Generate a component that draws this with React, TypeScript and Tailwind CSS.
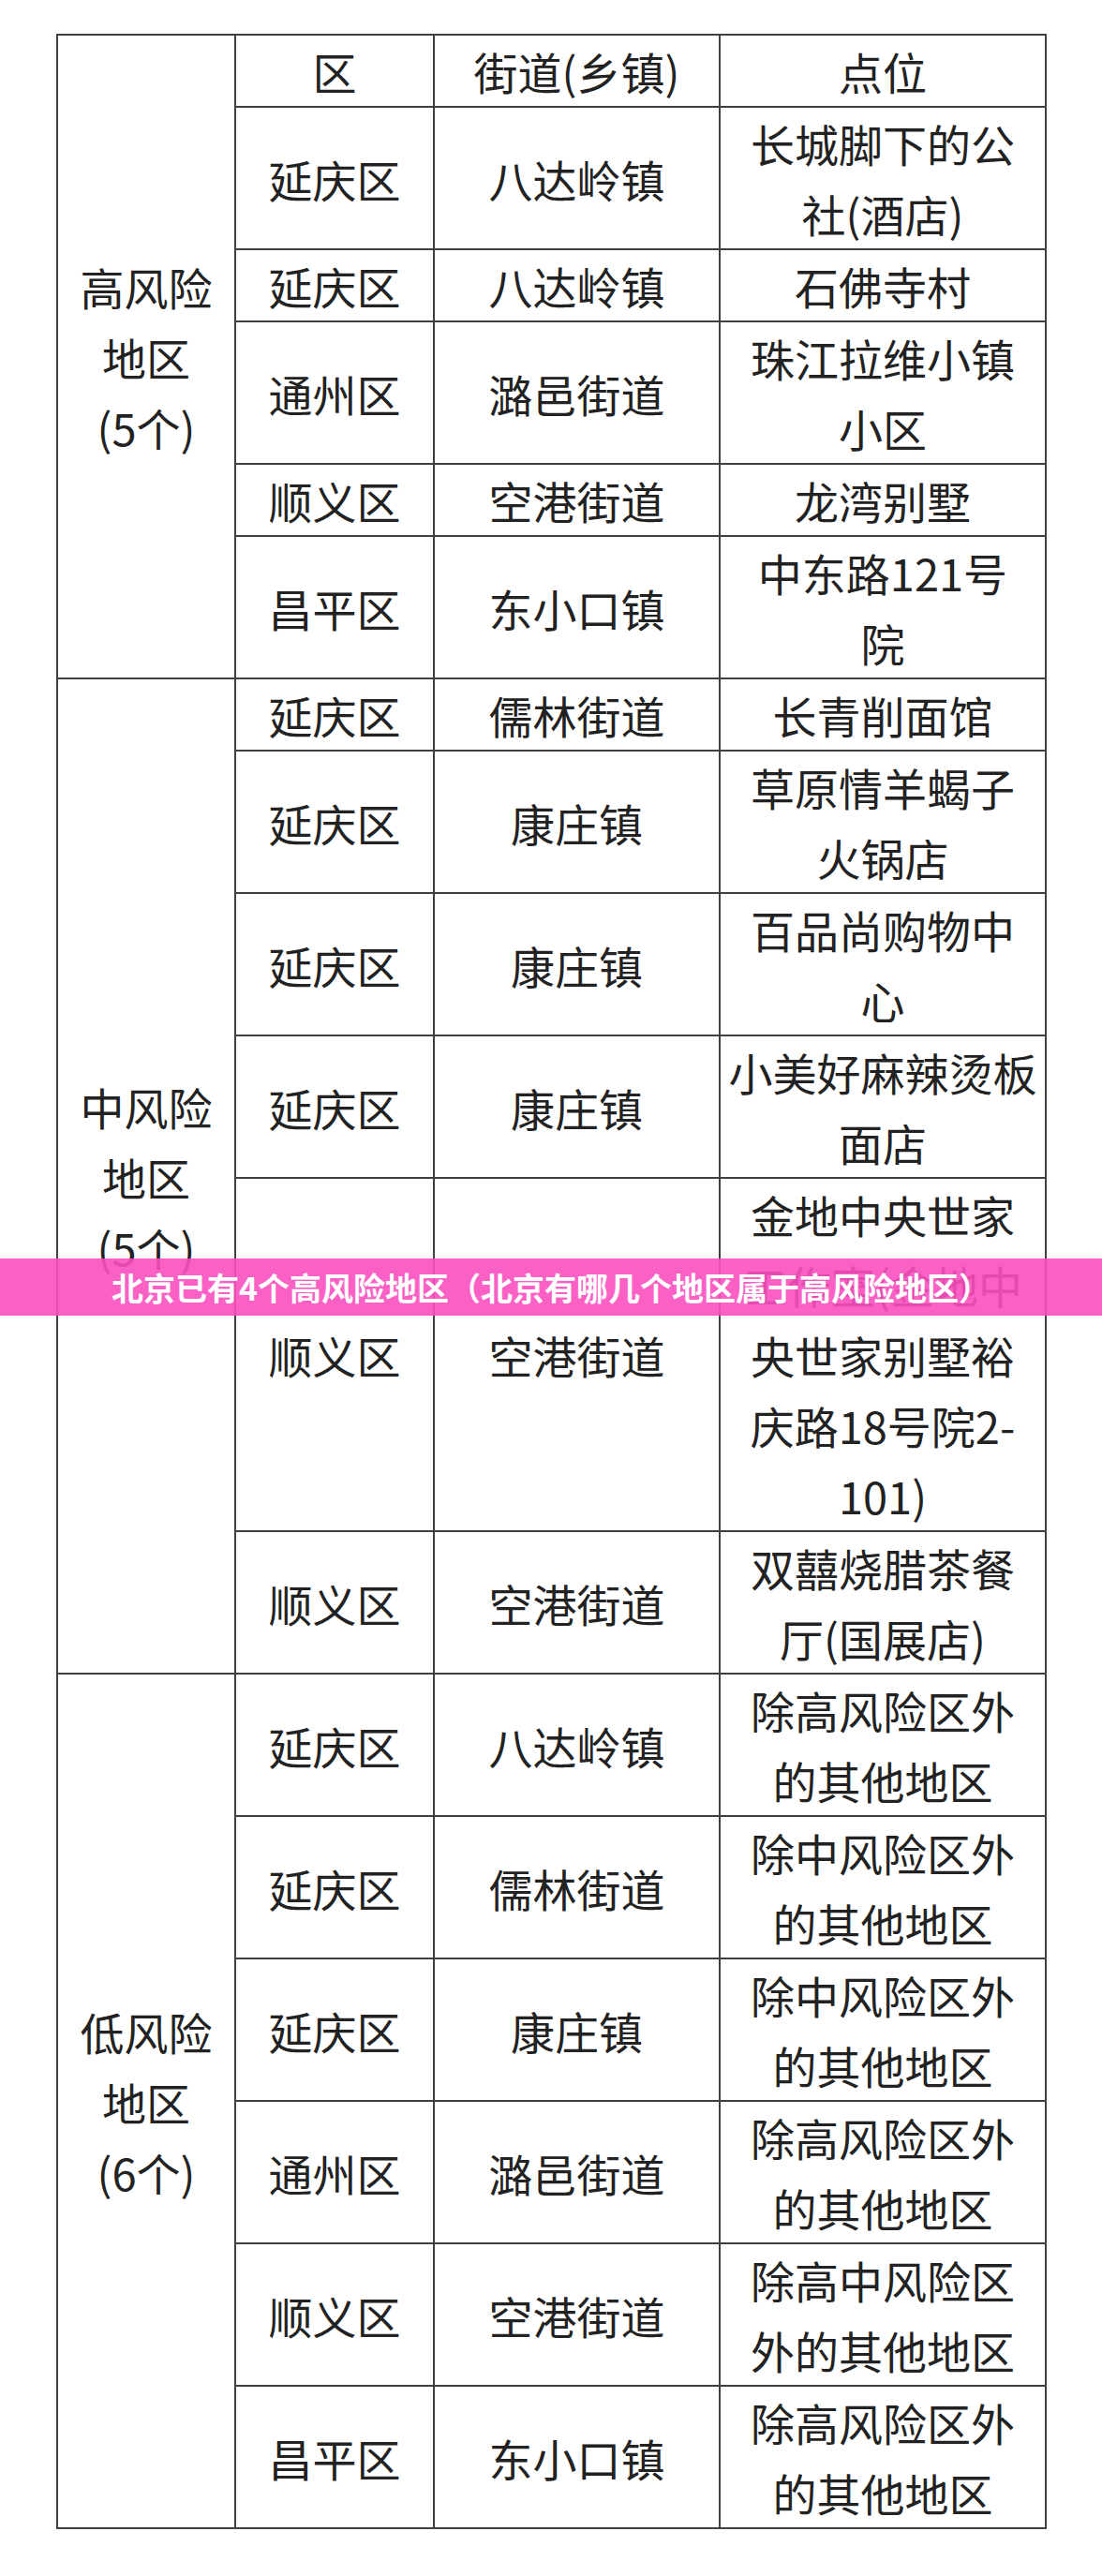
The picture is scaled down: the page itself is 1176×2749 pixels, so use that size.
type Row = { district: string; street: string; place: string[] };

const groups: { label: string[]; rows: Row[] }[] = [
  {
    label: ["高风险", "地区", "(5个)"],
    rows: [
      { district: "延庆区", street: "八达岭镇", place: ["长城脚下的公", "社(酒店)"] },
      { district: "延庆区", street: "八达岭镇", place: ["石佛寺村"] },
      { district: "通州区", street: "潞邑街道", place: ["珠江拉维小镇", "小区"] },
      { district: "顺义区", street: "空港街道", place: ["龙湾别墅"] },
      { district: "昌平区", street: "东小口镇", place: ["中东路121号", "院"] },
    ],
  },
  {
    label: ["中风险", "地区", "(5个)"],
    rows: [
      { district: "延庆区", street: "儒林街道", place: ["长青削面馆"] },
      { district: "延庆区", street: "康庄镇", place: ["草原情羊蝎子", "火锅店"] },
      { district: "延庆区", street: "康庄镇", place: ["百品尚购物中", "心"] },
      { district: "延庆区", street: "康庄镇", place: ["小美好麻辣烫板", "面店"] },
      {
        district: "顺义区",
        street: "空港街道",
        place: ["金地中央世家", "工作室(金地中", "央世家别墅裕", "庆路18号院2-", "101)"],
      },
      { district: "顺义区", street: "空港街道", place: ["双囍烧腊茶餐", "厅(国展店)"] },
    ],
  },
  {
    label: ["低风险", "地区", "(6个)"],
    rows: [
      { district: "延庆区", street: "八达岭镇", place: ["除高风险区外", "的其他地区"] },
      { district: "延庆区", street: "儒林街道", place: ["除中风险区外", "的其他地区"] },
      { district: "延庆区", street: "康庄镇", place: ["除中风险区外", "的其他地区"] },
      { district: "通州区", street: "潞邑街道", place: ["除高风险区外", "的其他地区"] },
      { district: "顺义区", street: "空港街道", place: ["除高中风险区", "外的其他地区"] },
      { district: "昌平区", street: "东小口镇", place: ["除高风险区外", "的其他地区"] },
    ],
  },
];

const cell = "border-2 border-[#404040] p-0 text-center align-middle whitespace-nowrap";

function Lines({ lines }: { lines: string[] }) {
  return (
    <>
      {lines.map((l, i) => (
        <div key={i}>{l}</div>
      ))}
    </>
  );
}

export default function App() {
  return (
    <div className="relative min-h-[2749px] w-[1176px] bg-white pt-[36px] pl-[60px] font-['Noto_Sans_CJK_SC','Noto_Sans',sans-serif] text-[#222]">
      <table className="w-[1055px] table-fixed border-collapse text-[47px] leading-[75px]">
        <colgroup>
          <col className="w-[190px]" />
          <col className="w-[212px]" />
          <col className="w-[305px]" />
          <col className="w-[348px]" />
        </colgroup>
        <tbody>
          {groups.map((g, gi) => (
            <>
              {gi === 0 && (
                <tr key="head">
                  <td rowSpan={g.rows.length + 1} className={cell}>
                    <Lines lines={g.label} />
                  </td>
                  <td className={cell}>区</td>
                  <td className={cell}>街道(乡镇)</td>
                  <td className={cell}>点位</td>
                </tr>
              )}
              {g.rows.map((r, ri) => (
                <tr key={`${gi}-${ri}`}>
                  {gi > 0 && ri === 0 && (
                    <td rowSpan={g.rows.length} className={cell}>
                      <Lines lines={g.label} />
                    </td>
                  )}
                  <td className={cell}>{r.district}</td>
                  <td className={cell}>{r.street}</td>
                  <td className={cell}>
                    <Lines lines={r.place} />
                  </td>
                </tr>
              ))}
            </>
          ))}
        </tbody>
      </table>

      {/* title banner laid over the table */}
      <div className="absolute left-0 top-[1343px] flex h-[61px] w-full items-center justify-center bg-[#fb4fbf]/90">
        <span className="text-[34px] font-bold leading-none text-white">
          北京已有4个高风险地区（北京有哪几个地区属于高风险地区）
        </span>
      </div>
    </div>
  );
}
